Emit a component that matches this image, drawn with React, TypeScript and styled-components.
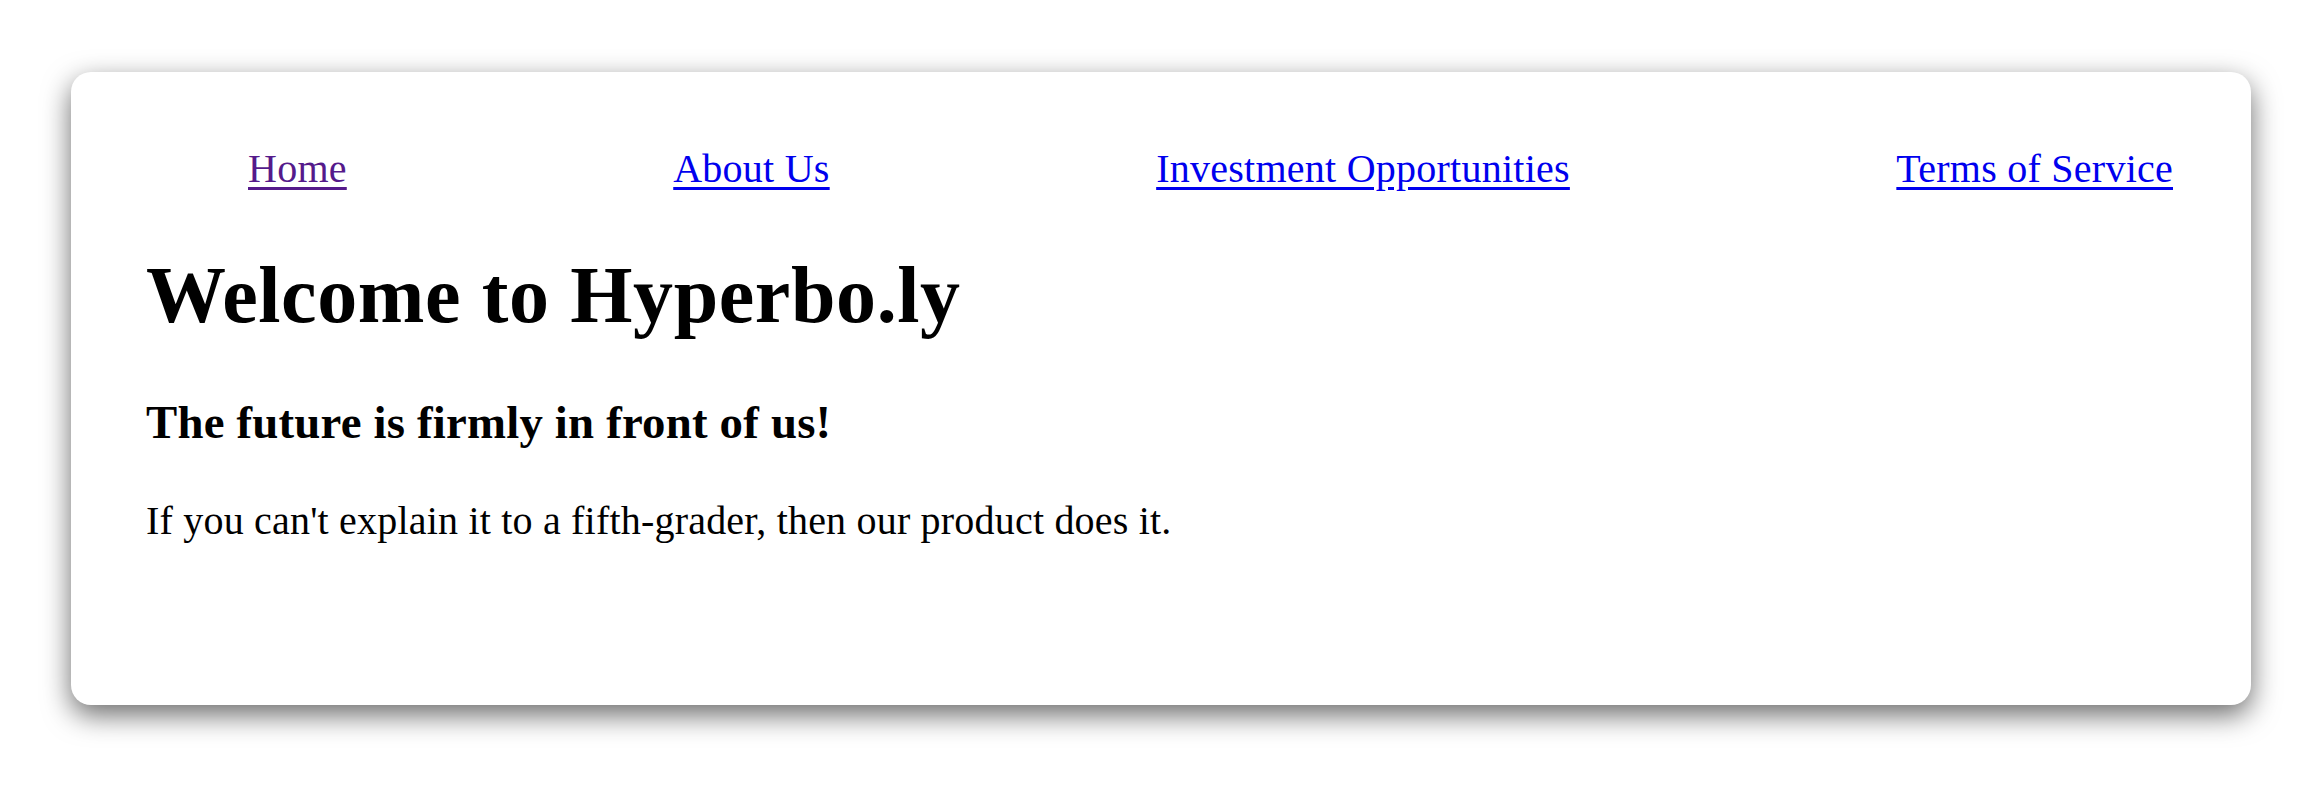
import React from "react";
import styled, { createGlobalStyle } from "styled-components";

const GlobalStyle = createGlobalStyle`
  html, body {
    margin: 0;
    padding: 0;
    background: #ffffff;
  }
  body {
    font-family: "Liberation Serif", "Times New Roman", serif;
    color: #000000;
  }
`;

const Page = styled.div`
  padding: 72px 73px 83px 71px;
  box-sizing: border-box;
  width: 100%;
`;

const Card = styled.main`
  box-sizing: border-box;
  height: 633px;
  padding: 73px 78px 0 75px;
  background: #ffffff;
  border-radius: 20px;
  box-shadow: 0 10px 28px rgba(0, 0, 0, 0.58);
`;

const Nav = styled.ul`
  display: flex;
  justify-content: space-between;
  list-style: none;
  margin: 0;
  padding: 0 0 0 102px;
  font-size: 40px;
  line-height: 48px;
  letter-spacing: 0.25px;
`;

const NavItem = styled.li`
  margin: 0;
`;

const NavLink = styled.a<{ $visited?: boolean }>`
  color: ${(p) => (p.$visited ? "#551a8b" : "#0000ee")};
  text-decoration: underline;
  text-decoration-thickness: 3px;
  text-underline-offset: 5px;
`;

const Title = styled.h1`
  margin: 54px 0 0;
  font-size: 80px;
  font-weight: 700;
  line-height: 96px;
  letter-spacing: 0.6px;
`;

const Subtitle = styled.h2`
  margin: 51px 0 0;
  font-size: 46.8px;
  font-weight: 700;
  line-height: 56px;
  letter-spacing: 0.2px;
`;

const Body = styled.p`
  margin: 47px 0 0;
  font-size: 40px;
  line-height: 48px;
  letter-spacing: 0.2px;
`;

const links = [
  { label: "Home", visited: true },
  { label: "About Us" },
  { label: "Investment Opportunities" },
  { label: "Terms of Service" },
];

export default function App() {
  return (
    <>
      <GlobalStyle />
      <Page>
        <Card>
          <Nav>
            {links.map((l) => (
              <NavItem key={l.label}>
                <NavLink href="#" $visited={l.visited}>
                  {l.label}
                </NavLink>
              </NavItem>
            ))}
          </Nav>
          <Title>Welcome to Hyperbo.ly</Title>
          <Subtitle>The future is firmly in front of us!</Subtitle>
          <Body>
            If you can't explain it to a fifth-grader, then our product does it.
          </Body>
        </Card>
      </Page>
    </>
  );
}
